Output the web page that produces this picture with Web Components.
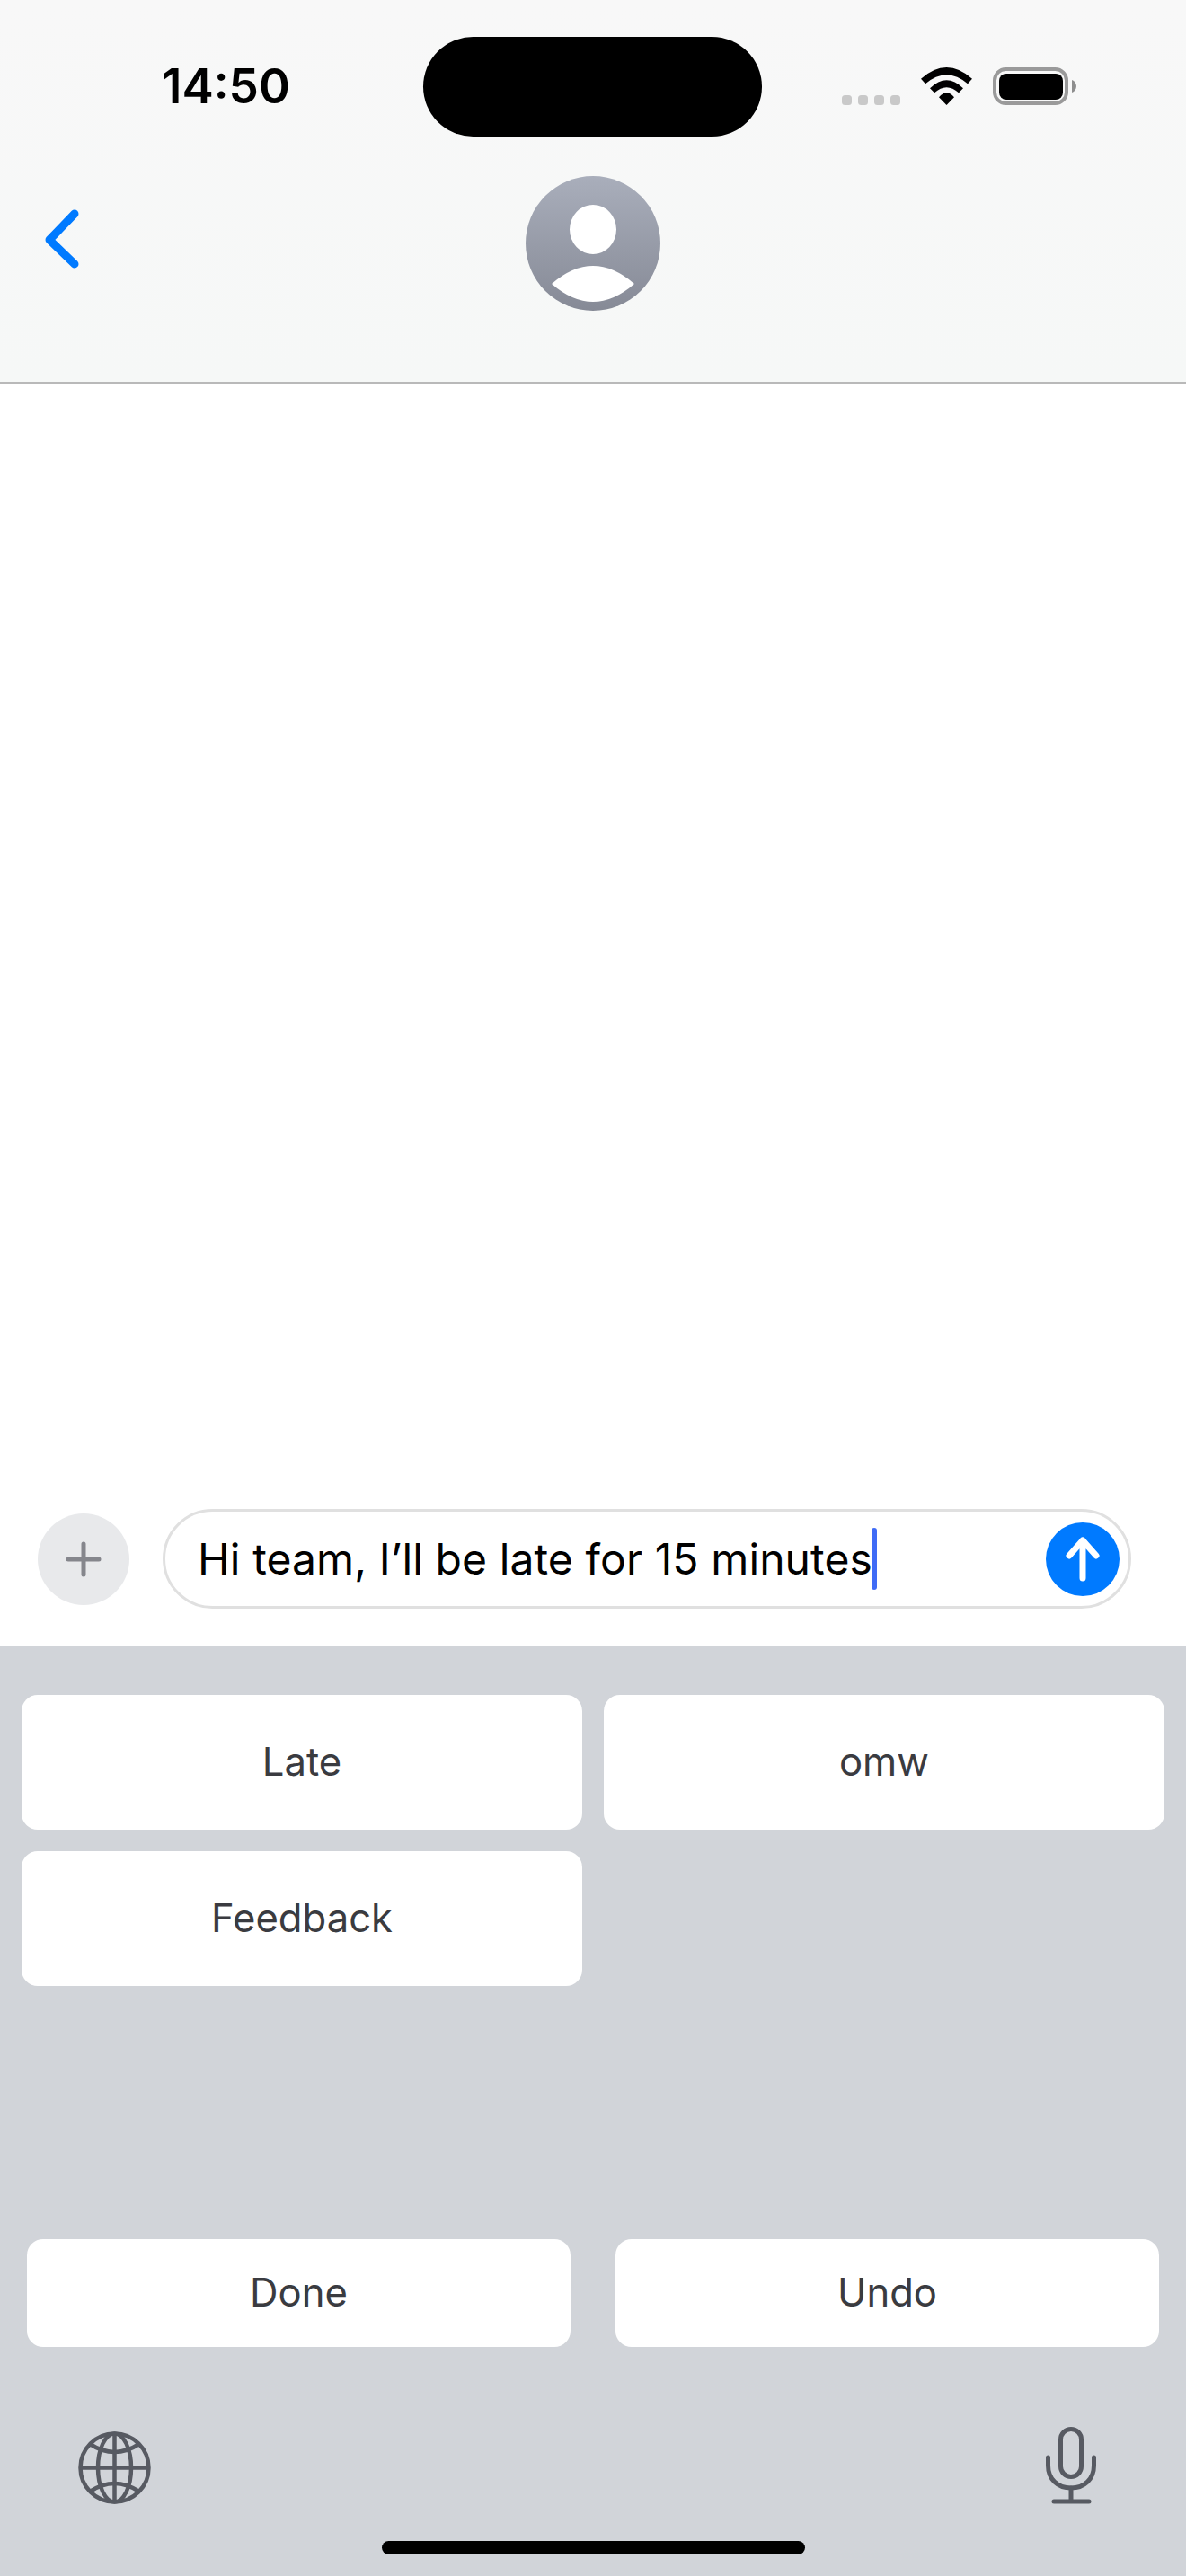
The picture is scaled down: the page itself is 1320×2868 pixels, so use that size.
<!DOCTYPE html>
<html lang="en">
<head>
<meta charset="utf-8">
<title>Message</title>
<style>
  html, body { margin: 0; padding: 0; }
  body { font-family: Inter, "Noto Sans", sans-serif; }
</style>
</head>
<body>
<chat-screen>
  <chat-header slot="header"></chat-header>
  <message-composer slot="composer">Hi team, I’ll be late for 15 minutes</message-composer>
  <reply-keyboard slot="keyboard">
    <reply-key slot="replies">Late</reply-key>
    <reply-key slot="replies">omw</reply-key>
    <reply-key slot="replies">Feedback</reply-key>
    <reply-key slot="actions">Done</reply-key>
    <reply-key slot="actions">Undo</reply-key>
  </reply-keyboard>
</chat-screen>

<script>
// Define templates.
const screenTemplate = document.createElement('template')
screenTemplate.innerHTML = `
<style>
  :host { display: flex; flex-direction: column; width: 1320px; height: 2868px; background: #fff; overflow: hidden; }
  #thread { flex: 1; }
</style>
<slot name="header"></slot>
<div id="thread"></div>
<slot name="composer"></slot>
<slot name="keyboard"></slot>
`

const headerTemplate = document.createElement('template')
headerTemplate.innerHTML = `
<style>
  :host { display: block; height: 425px; box-sizing: content-box; background: linear-gradient(#f8f8f8, #f6f8f7); border-bottom: 2px solid #b9b9b9; }
  #status { display: grid; grid-template-columns: 471px 377px 1fr; height: 111px; padding-top: 41px; }
  #time { padding-left: 180px; align-self: center; font-size: 53px; font-weight: 600; line-height: 1; color: #000; }
  #island { background: #000; border-radius: 56px; }
  #icons { display: flex; align-items: flex-end; gap: 23px; height: 42px; margin-top: 34px; padding-left: 89px; }
  #dots { display: flex; gap: 7px; }
  #dots i { width: 11px; height: 11px; border-radius: 3.5px; background: #c9c9c9; }
  #nav { display: grid; grid-template-columns: 585px 150px; margin-top: 44px; }
  #back { padding: 36px 0 0 48px; }
  svg { display: block; }
</style>
<div id="status">
  <div id="time">14:50</div>
  <div id="island"></div>
  <div id="icons">
    <div id="dots"><i></i><i></i><i></i><i></i></div>
    <svg width="57" height="42" viewBox="0 0 57 42" fill="#000">
      <path d="M0 12.7Q28.5 -12.7 57 12.7L52 18.3Q28.5 -1.7 5 18.3Z"/>
      <path d="M10 23.3Q28.5 5.3 47 23.3L42 28.3Q28.5 16.3 15 28.3Z"/>
      <path d="M20 33.3Q28.5 23.3 37 33.3L28.5 42Z"/>
    </svg>
    <svg width="93" height="42" viewBox="0 0 93 42">
      <rect x="2" y="2" width="80" height="38" rx="12.5" fill="none" stroke="#9a9a9a" stroke-width="4"/>
      <rect x="7" y="7" width="71" height="29" rx="8" fill="#000"/>
      <path d="M88 14C91 15 93 18 93 21S91 27 88 28Z" fill="#8e8e8e"/>
    </svg>
  </div>
</div>
<div id="nav">
  <div id="back">
    <svg width="44" height="70" viewBox="0 0 44 70" fill="none" stroke="#007aff" stroke-width="9" stroke-linecap="round" stroke-linejoin="round">
      <path d="M35 6L7 35L35 62"/>
    </svg>
  </div>
  <svg width="150" height="150" viewBox="0 0 150 150">
    <defs>
      <linearGradient id="avatarFill" x1="0" y1="0" x2="0" y2="1">
        <stop offset="0" stop-color="#a9aebb"/>
        <stop offset="1" stop-color="#868a96"/>
      </linearGradient>
    </defs>
    <circle cx="75" cy="75" r="75" fill="url(#avatarFill)"/>
    <ellipse cx="75" cy="59.5" rx="26" ry="27.5" fill="#fff"/>
    <path d="M29 120Q75 80 121 120Q75 160 29 120Z" fill="#fff"/>
  </svg>
</div>
`

const composerTemplate = document.createElement('template')
composerTemplate.innerHTML = `
<style>
  :host { display: flex; align-items: center; gap: 37px; padding: 0 61px 42px 42px; }
  #add { flex: none; width: 102px; height: 102px; border-radius: 50%; background: #e8e9eb; display: flex; align-items: center; justify-content: center; }
  #field { flex: 1; box-sizing: border-box; height: 111px; display: flex; align-items: center; padding: 0 10px 0 36px; border: 3px solid #e0e0e0; border-radius: 56px; background: #fff; }
  #text { font-size: 48px; letter-spacing: 0.11px; line-height: 1; color: #000; white-space: nowrap; }
  #caret { flex: none; width: 6px; height: 69px; margin-left: -1px; border-radius: 3px; background: #3f6bf6; }
  #send { flex: none; width: 82px; height: 82px; margin-left: auto; border-radius: 50%; background: #007aff; display: flex; align-items: center; justify-content: center; }
  svg { display: block; }
</style>
<div id="add">
  <svg width="40" height="40" viewBox="0 0 40 40" stroke="#85868c" stroke-width="5" stroke-linecap="round">
    <path d="M20 3V37M3 20H37"/>
  </svg>
</div>
<div id="field">
  <span id="text"><slot></slot></span>
  <span id="caret"></span>
  <span id="send">
    <svg width="44" height="50" viewBox="0 0 44 50" fill="none" stroke="#fff" stroke-width="7" stroke-linecap="round" stroke-linejoin="round">
      <path d="M22 4V46M7 21L22 4L37 21"/>
    </svg>
  </span>
</div>
`

const keyboardTemplate = document.createElement('template')
keyboardTemplate.innerHTML = `
<style>
  :host { display: flex; flex-direction: column; height: 1035px; box-sizing: border-box; padding-top: 54px; background: #d1d4d9; }
  #replies { display: grid; grid-template-columns: 624px 624px; grid-auto-rows: 150px; gap: 24px; height: 606px; padding: 0 24px; }
  #actions { display: grid; grid-template-columns: 605px 605px; gap: 50px; height: 120px; padding: 0 30px; }
  #tools { display: flex; justify-content: space-between; align-items: flex-start; margin-top: 89px; padding: 0 100px 0 87px; }
  #globe { margin-top: 5px; }
  #home { width: 471px; height: 15px; margin: 41px 0 0 425px; border-radius: 8px; background: #000; }
  svg { display: block; }
</style>
<div id="replies"><slot name="replies"></slot></div>
<div id="actions"><slot name="actions"></slot></div>
<div id="tools">
  <svg id="globe" width="81" height="81" viewBox="0 0 81 81" fill="none" stroke="#575a62" stroke-width="4.5">
    <circle cx="40.5" cy="40.5" r="38"/>
    <ellipse cx="40.5" cy="40.5" rx="18.5" ry="38"/>
    <path d="M40.5 2.5V78.5M2.5 40.5H78.5"/>
    <path d="M13 14Q40.5 32 68 14M13 67Q40.5 49 68 67"/>
  </svg>
  <svg width="56" height="86" viewBox="0 0 56 86" fill="none" stroke="#575a62" stroke-width="5" stroke-linecap="round">
    <rect x="16.5" y="2.5" width="23" height="53" rx="11.5"/>
    <path d="M2.5 34V43C2.5 58 13 68 28 68S53.5 58 53.5 43V34"/>
    <path d="M28 68V82M9 83H48" />
  </svg>
</div>
<div id="home"></div>
`

const keyTemplate = document.createElement('template')
keyTemplate.innerHTML = `
<style>
  :host { display: flex; align-items: center; justify-content: center; background: #fff; border-radius: 18px; font-size: 43.6px; line-height: 1; color: #3a3b40; }
</style>
<slot></slot>
`

/**
 * Attaches an open shadow root holding a copy of the template.
 *
 * @param {HTMLElement} host - The element to fill.
 * @param {HTMLTemplateElement} template - The template to clone.
 */
function fill (host, template) {
  host.attachShadow({ mode: 'open' })
  host.shadowRoot.appendChild(template.content.cloneNode(true))
}

customElements.define('chat-screen', class extends HTMLElement {
  constructor () {
    super()
    fill(this, screenTemplate)
  }
})

customElements.define('chat-header', class extends HTMLElement {
  constructor () {
    super()
    fill(this, headerTemplate)
  }
})

customElements.define('message-composer', class extends HTMLElement {
  constructor () {
    super()
    fill(this, composerTemplate)
  }
})

customElements.define('reply-keyboard', class extends HTMLElement {
  constructor () {
    super()
    fill(this, keyboardTemplate)
  }
})

customElements.define('reply-key', class extends HTMLElement {
  constructor () {
    super()
    fill(this, keyTemplate)
  }
})
</script>
</body>
</html>
